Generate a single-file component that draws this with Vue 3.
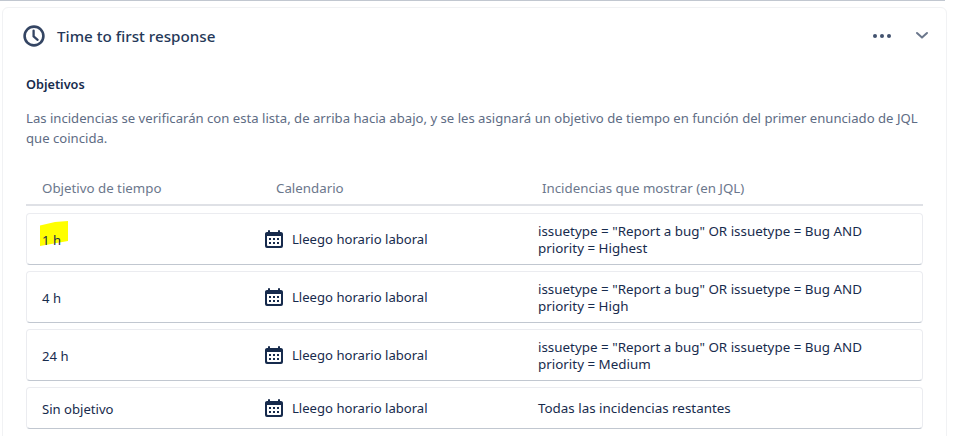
<script setup>
const rows = [
  { time: '1 h', jql: 'issuetype = "Report a bug" OR issuetype = Bug AND priority = Highest', mark: true },
  { time: '4 h', jql: 'issuetype = "Report a bug" OR issuetype = Bug AND priority = High' },
  { time: '24 h', jql: 'issuetype = "Report a bug" OR issuetype = Bug AND priority = Medium' },
  { time: 'Sin objetivo', jql: 'Todas las incidencias restantes', short: true },
]
const calendarPath = 'M4.995 5h14.01C20.107 5 21 5.895 21 6.994v12.012A1.994 1.994 0 0 1 19.005 21H4.995A1.995 1.995 0 0 1 3 19.006V6.994C3 5.893 3.892 5 4.995 5zM5 9v9a1 1 0 0 0 1 1h12a1 1 0 0 0 1-1V9H5zm1-5a1 1 0 0 1 2 0v1H6V4zm10 0a1 1 0 0 1 2 0v1h-2V4zm-9 9v-2h2v2H7zm8 0v-2h2v2h-2zm-4 0v-2h2v2h-2zm-4 4v-2h2v2H7zm4 0v-2h2v2h-2zm4 0v-2h2v2h-2z'
</script>

<template>
  <div class="page">
    <section class="card">
      <header class="head">
        <svg class="clock" width="22" height="22" viewBox="0 0 22 22" fill="none">
          <circle cx="11" cy="11" r="9.4" stroke="#344563" stroke-width="2.6" />
          <path d="M10.6 5.6V11.4L14.6 14.8" stroke="#344563" stroke-width="2.3" stroke-linecap="round" stroke-linejoin="round" />
        </svg>
        <h2 class="title">Time to first response</h2>
        <span class="dots"><i></i><i></i><i></i></span>
        <svg class="chev" width="14" height="9" viewBox="0 0 14 9" fill="none">
          <path d="M2 2L7 6.6L12 2" stroke="#6b778c" stroke-width="2" stroke-linecap="round" stroke-linejoin="round" />
        </svg>
      </header>
      <h3 class="sub">Objetivos</h3>
      <p class="desc">Las incidencias se verificarán con esta lista, de arriba hacia abajo, y se les asignará un objetivo de tiempo en función del primer enunciado de JQL que coincida.</p>
      <div class="thead">
        <span>Objetivo de tiempo</span>
        <span>Calendario</span>
        <span>Incidencias que mostrar (en JQL)</span>
      </div>
      <div class="rows">
        <div v-for="r in rows" :key="r.time" class="row" :class="{ short: r.short }">
          <div class="time">
            <svg v-if="r.mark" class="mark" width="28" height="26" viewBox="0 0 28 26">
              <path d="M0 4.5L15 1L28 0L28 20L0 25Z" fill="#ffff00" />
            </svg>
            <span class="time-text">{{ r.time }}</span>
          </div>
          <div class="cal">
            <svg class="cal-icon" width="24" height="24" viewBox="0 0 24 24">
              <path fill="#172b4d" fill-rule="evenodd" :d="calendarPath" />
            </svg>
            <span>Lleego horario laboral</span>
          </div>
          <div class="jql">{{ r.jql }}</div>
        </div>
      </div>
    </section>
  </div>
</template>

<style>
html, body { margin: 0; background: #fff; }
</style>

<style scoped>
.page {
  box-sizing: border-box;
  width: 957px;
  height: 436px;
  overflow: hidden;
  padding-top: 7px;
  font-family: "Noto Sans", sans-serif;
  color: #172b4d;
  background: #fff;
  position: relative;
}
.page::before {
  content: "";
  position: absolute;
  left: 0;
  top: 0;
  width: 945px;
  height: 1px;
  background: #c1c7d0;
}
.card {
  box-sizing: border-box;
  width: 945px;
  margin-left: 2px;
  border: 1px solid #f1f2f4;
  border-radius: 6px;
  padding: 0 23px;
  height: 500px;
}
.head {
  display: flex;
  align-items: center;
  height: 55px;
  margin-left: -3px;
  margin-right: -6px;
}
.clock { margin-right: 12px; }
.title {
  flex: 1;
  margin: 0;
  font-size: 15.2px;
  font-weight: 500;
  color: #253858;
}
.dots { display: flex; gap: 3px; margin-right: 24px; }
.dots i { width: 4px; height: 4px; border-radius: 50%; background: #42526e; }
.chev { margin-top: -1px; }
.sub {
  margin: 12px 0 0;
  font-size: 12.7px;
  line-height: 18px;
  font-weight: 600;
  color: #172b4d;
}
.desc {
  margin: 15px 0 0;
  font-size: 13.13px;
  line-height: 20px;
  color: #5e6c84;
}
.thead {
  display: grid;
  grid-template-columns: 234px 266px 1fr;
  margin-top: 23px;
  padding: 4px 0 0 16px;
  height: 35px;
  line-height: 26px;
  box-sizing: border-box;
  font-size: 13.3px;
  color: #6b778c;
  border-bottom: 2px solid #dfe1e6;
}
.rows { display: flex; flex-direction: column; gap: 6px; margin-top: 7px; }
.row {
  display: grid;
  grid-template-columns: 223px 273px 1fr;
  align-items: center;
  box-sizing: border-box;
  height: 52px;
  padding-left: 15px;
  border: 1px solid #ebecf0;
  border-bottom-color: #c1c7d0;
  border-radius: 4px;
  font-size: 13.1px;
  line-height: 18px;
  color: #172b4d;
}
.row.short { height: 42px; }
.time { position: relative; padding-top: 2px; }
.mark { position: absolute; left: -2px; top: -8px; }
.time-text { position: relative; }
.cal { display: flex; align-items: center; gap: 6px; }
.cal-icon { margin-left: -3px; }
.jql { width: 345px; padding-top: 2px; font-size: 13.4px; line-height: 17.5px; }
</style>
